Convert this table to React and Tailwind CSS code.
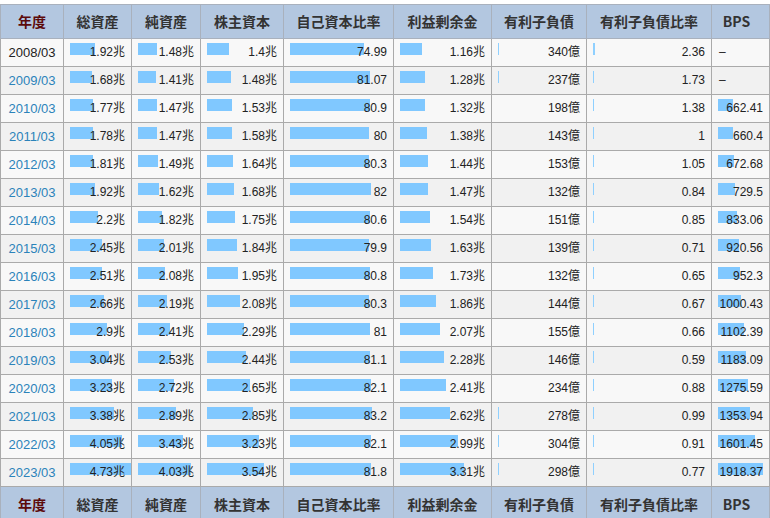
import React from "react";

const rows = [
  ["2008/03", 1.92, 1.48, 1.4, 74.99, 1.16, 340, 2.36, null],
  ["2009/03", 1.68, 1.41, 1.48, 81.07, 1.28, 237, 1.73, null],
  ["2010/03", 1.77, 1.47, 1.53, 80.9, 1.32, 198, 1.38, 662.41],
  ["2011/03", 1.78, 1.47, 1.58, 80, 1.38, 143, 1, 660.4],
  ["2012/03", 1.81, 1.49, 1.64, 80.3, 1.44, 153, 1.05, 672.68],
  ["2013/03", 1.92, 1.62, 1.68, 82, 1.47, 132, 0.84, 729.5],
  ["2014/03", 2.2, 1.82, 1.75, 80.6, 1.54, 151, 0.85, 833.06],
  ["2015/03", 2.45, 2.01, 1.84, 79.9, 1.63, 139, 0.71, 920.56],
  ["2016/03", 2.51, 2.08, 1.95, 80.8, 1.73, 132, 0.65, 952.3],
  ["2017/03", 2.66, 2.19, 2.08, 80.3, 1.86, 144, 0.67, 1000.43],
  ["2018/03", 2.9, 2.41, 2.29, 81, 2.07, 155, 0.66, 1102.39],
  ["2019/03", 3.04, 2.53, 2.44, 81.1, 2.28, 146, 0.59, 1183.09],
  ["2020/03", 3.23, 2.72, 2.65, 82.1, 2.41, 234, 0.88, 1275.59],
  ["2021/03", 3.38, 2.89, 2.85, 83.2, 2.62, 278, 0.99, 1353.94],
  ["2022/03", 4.05, 3.43, 3.23, 82.1, 2.99, 304, 0.91, 1601.45],
  ["2023/03", 4.73, 4.03, 3.54, 81.8, 3.31, 298, 0.77, 1918.37],
];

const MAX = 4.73;
const heads = ["年度", "総資産", "純資産", "株主資本", "自己資本比率", "利益剰余金", "有利子負債", "有利子負債比率", "BPS"];
const cols = "grid grid-cols-[63px_68px_69px_83px_110px_98px_95px_125px_1fr]";
const numFont = { fontFamily: '"Liberation Sans", "Noto Sans CJK JP", Arial, sans-serif' };

function HeaderRow({ top }) {
  return (
    <div
      className={`${cols} h-[35px] bg-[#b3c7e0] border-l border-b border-[#a9b1bd] ${top ? "border-t" : ""}`}
      style={{ fontFamily: '"Noto Sans CJK JP", "Noto Sans", sans-serif' }}
    >
      {heads.map((h, i) => (
        <div
          key={h}
          className={`flex items-center justify-center border-r border-[#a9b1bd] text-[14px] font-bold ${
            i === 0 ? "text-[#5c0a0a]" : "text-[#333333]"
          } ${i === 8 ? "pr-[8px]" : ""}`}
        >
          {h}
        </div>
      ))}
    </div>
  );
}

function BarCell({ w, text, thin, left }) {
  return (
    <div className="relative border-r border-[#aaaaaa] h-[27px]">
      {w > 0 && (
        <div
          className={`absolute left-[6px] top-[4px] h-[12px] ${thin ? "bg-[#8fd0ff]" : "bg-[#80c8ff]"}`}
          style={{ width: w }}
        />
      )}
      <div
        className={`relative leading-[27px] text-[12px] text-[#222222] ${left ? "text-left pl-[7px]" : "text-right pr-[6px]"}`}
      >
        {text}
      </div>
    </div>
  );
}

function DataRow({ r, idx }) {
  const [year, ta, na, sc, ratio, re, debt, dr, bps] = r;
  const debtPct = Math.round((debt / 47300) * 100);
  return (
    <div
      className={`${cols} border-l border-b border-[#aaaaaa] ${idx % 2 === 0 ? "bg-[#f8f8f8]" : "bg-[#f1f1f1]"}`}
      style={numFont}
    >
      <div
        className={`border-r border-[#aaaaaa] h-[27px] leading-[27px] text-center text-[13px] ${
          idx === 0 ? "text-[#222222]" : "text-[#2b83ba]"
        }`}
      >
        {year}
      </div>
      <BarCell w={(ta / MAX) * 61} text={`${ta}兆`} />
      <BarCell w={(na / MAX) * 62} text={`${na}兆`} />
      <BarCell w={(sc / MAX) * 76} text={`${sc}兆`} />
      <BarCell w={ratio * 0.987} text={`${ratio}`} />
      <BarCell w={(re / MAX) * 91} text={`${re}兆`} />
      <BarCell w={debtPct > 0 ? 1 : 0} thin text={`${debt}億`} />
      <BarCell w={dr > 2 ? 1.5 : 1} thin text={`${dr}`} />
      {bps === null ? (
        <BarCell w={0} text="–" left />
      ) : (
        <BarCell w={bps * 0.0233} text={`${bps}`} />
      )}
    </div>
  );
}

export default function App() {
  return (
    <div className="w-[770px] h-[518px] overflow-hidden bg-white pt-[4px]">
      <HeaderRow top />
      {rows.map((r, i) => (
        <DataRow key={r[0]} r={r} idx={i} />
      ))}
      <HeaderRow />
    </div>
  );
}
